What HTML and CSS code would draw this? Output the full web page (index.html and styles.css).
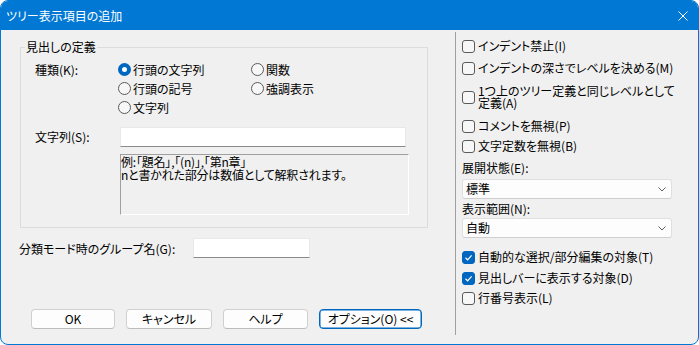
FILE: index.html
```html
<!DOCTYPE html>
<html lang="ja">
<head>
<meta charset="utf-8">
<title>ツリー表示項目の追加</title>
<link rel="stylesheet" href="styles.css">
</head>
<body>
<div class="window">
  <div class="titlebar">
    <span class="title">ツリー表示項目の追加</span>
    <svg class="close" width="10" height="10" viewBox="0 0 10 10"><path d="M0.5 0.5L9.5 9.5M9.5 0.5L0.5 9.5" stroke="#fff" stroke-width="1" fill="none"/></svg>
  </div>
  <div class="content">
    <div class="left">
      <fieldset class="group">
        <legend>見出しの定義</legend>
        <div class="kind-row">
          <span class="kind-lbl">種類(K):</span>
          <div class="radios">
            <div class="radio"><span class="rb on"></span>行頭の文字列</div>
            <div class="radio"><span class="rb"></span>関数</div>
            <div class="radio"><span class="rb"></span>行頭の記号</div>
            <div class="radio"><span class="rb"></span>強調表示</div>
            <div class="radio"><span class="rb"></span>文字列</div>
          </div>
        </div>
        <div class="str-row">
          <span class="str-lbl">文字列(S):</span>
          <div class="str-fields">
            <div class="edit str-edit"></div>
            <div class="example">例:「題名」,「(n)」,「第n章」<br>nと書かれた部分は数値として解釈されます。</div>
          </div>
        </div>
      </fieldset>
      <div class="gname-row">
        <span class="gname-lbl">分類モード時のグループ名(G):</span>
        <div class="edit gname-edit"></div>
      </div>
      <div class="buttons">
        <div class="btn btn-ok">OK</div>
        <div class="btn btn-cancel">キャンセル</div>
        <div class="btn btn-help">ヘルプ</div>
        <div class="btn btn-opt focus">オプション(O) &lt;&lt;</div>
      </div>
    </div>
    <div class="sep"></div>
    <div class="right">
      <div class="check r1"><span class="cb"></span>インデント禁止(I)</div>
      <div class="check r2"><span class="cb"></span>インデントの深さでレベルを決める(M)</div>
      <div class="check r3"><span class="cb"></span><span class="two">1つ上のツリー定義と同じレベルとして<br>定義(A)</span></div>
      <div class="check r4"><span class="cb"></span>コメントを無視(P)</div>
      <div class="check r5"><span class="cb"></span>文字定数を無視(B)</div>
      <div class="flabel fl1">展開状態(E):</div>
      <div class="combo cb1"><span>標準</span><svg width="8" height="5" viewBox="0 0 8 5"><path d="M0.5 0.5L4 4L7.5 0.5" stroke="#606060" fill="none" stroke-width="1"/></svg></div>
      <div class="flabel fl2">表示範囲(N):</div>
      <div class="combo cb2"><span>自動</span><svg width="8" height="5" viewBox="0 0 8 5"><path d="M0.5 0.5L4 4L7.5 0.5" stroke="#606060" fill="none" stroke-width="1"/></svg></div>
      <div class="check r6"><span class="cb on"><svg width="9" height="9" viewBox="0 0 9 9"><path d="M1.5 4.8L3.6 6.8L7.6 2.4" stroke="#fff" stroke-width="1.2" fill="none"/></svg></span>自動的な選択/部分編集の対象(T)</div>
      <div class="check r7"><span class="cb on"><svg width="9" height="9" viewBox="0 0 9 9"><path d="M1.5 4.8L3.6 6.8L7.6 2.4" stroke="#fff" stroke-width="1.2" fill="none"/></svg></span>見出しバーに表示する対象(D)</div>
      <div class="check r8"><span class="cb"></span>行番号表示(L)</div>
    </div>
  </div>
</div>
</body>
</html>
```

FILE: styles.css
```css
html, body {
  margin: 0;
  padding: 0;
  background: #ffffff;
}
body {
  font-family: "Noto Sans CJK JP", "Noto Sans", sans-serif;
  font-size: 12px;
  font-feature-settings: "palt" 1;
  color: #000;
}
.window {
  width: 699px;
  height: 345px;
  box-sizing: border-box;
  border: 1px solid #0078d4;
  border-radius: 8px;
  overflow: hidden;
  background: #f0f0f0;
}
.titlebar {
  height: 29px;
  background: #0078d4;
  color: #fff;
  display: flex;
  align-items: center;
  justify-content: space-between;
  padding: 0 10px 0 5px;
  box-sizing: border-box;
  font-size: 12px;
  line-height: 14px;
}
.title {
  padding-top: 1px;
}
.close {
  display: block;
}
.content {
  display: flex;
  height: 314px;
}
.left {
  width: 454px;
  flex: none;
}
.sep {
  width: 1px;
  background: #a0a0a0;
  margin: 2px 0 9px 0;
  flex: none;
}
.right {
  flex: 1;
  padding-left: 6px;
  display: flex;
  flex-direction: column;
}

/* group box */
.group {
  margin: 10px 0 0 19px;
  padding: 0 0 0 4px;
  border: 1px solid #dcdcdc;
  width: 408px;
  height: 188px;
  box-sizing: border-box;
  min-width: 0;
}
.group legend {
  padding: 0 1px;
  line-height: 14px;
  font-size: 12px;
}
.kind-row {
  display: flex;
  margin: 6px 0 0 10px;
}
.kind-lbl {
  width: 83px;
  line-height: 19px;
  flex: none;
}
.radios {
  display: grid;
  grid-template-columns: 133px auto;
  grid-auto-rows: 19px;
}
.radio {
  display: flex;
  align-items: center;
  gap: 2px;
  line-height: 19px;
}
.rb {
  width: 13px;
  height: 13px;
  box-sizing: border-box;
  border: 1px solid #5a5a5a;
  border-radius: 50%;
  background: #f7f7f7;
  flex: none;
}
.rb.on {
  border: 4px solid #0067c0;
  background: #ffffff;
}
.str-row {
  display: flex;
  margin: 10px 0 0 10px;
}
.str-lbl {
  width: 85px;
  line-height: 20px;
  flex: none;
}
.edit {
  background: #ffffff;
  box-sizing: border-box;
  border: 1px solid #e8e8e8;
  border-bottom-color: #8a8a8a;
  height: 20px;
}
.str-edit {
  width: 286px;
}
.example {
  margin-top: 7px;
  width: 289px;
  height: 61px;
  box-sizing: border-box;
  border: 1px solid #ffffff;
  border-top-color: #a0a0a0;
  border-left-color: #a0a0a0;
  font-size: 12px;
  line-height: 13px;
  letter-spacing: -0.2px;
}

.gname-row {
  display: flex;
  margin: 10px 0 0 18px;
}
.gname-lbl {
  width: 174px;
  line-height: 22px;
  flex: none;
}
.gname-edit {
  width: 117px;
}

.buttons {
  display: flex;
  gap: 11px;
  margin: 49px 0 0 30px;
}
.btn {
  height: 20px;
  box-sizing: border-box;
  border: 1px solid #d0d0d0;
  border-bottom-color: #bcbcbc;
  border-radius: 4px;
  background: #fdfdfd;
  display: flex;
  align-items: center;
  justify-content: center;
  line-height: 14px;
}
.btn-ok { width: 84px; }
.btn-cancel { width: 86px; }
.btn-help { width: 85px; }
.btn-opt { width: 103px; }
.btn.focus {
  border: 1px solid #0067c0;
  box-shadow: inset 0 0 0 0.5px #0067c0;
}

/* right column */
.check {
  display: flex;
  align-items: center;
  gap: 3px;
  height: 20px;
  line-height: 14px;
  white-space: nowrap;
}
.cb {
  width: 13px;
  height: 13px;
  box-sizing: border-box;
  border: 1px solid #5a5a5a;
  border-radius: 3px;
  background: #f7f7f7;
  flex: none;
  display: flex;
  align-items: center;
  justify-content: center;
}
.cb.on {
  background: #0067c0;
  border-color: #0067c0;
}
.cb svg { display: block; }
.two {
  line-height: 12px;
}
.r1 { margin-top: 6px; }
.r2 { margin-top: 2px; }
.r3 { margin-top: 7px; height: 24px; }
.r4 { margin-top: 7px; }
.r5 { margin-top: 0; }
.flabel {
  line-height: 16px;
  height: 16px;
}
.fl1 { margin-top: 4px; }
.fl2 { margin-top: 2px; }
.combo {
  width: 210px;
  height: 20px;
  box-sizing: border-box;
  border: 1px solid #e0e0e0;
  border-bottom-color: #cfcfcf;
  border-radius: 3px;
  background: #fdfdfd;
  display: flex;
  align-items: center;
  justify-content: space-between;
  padding: 0 5px 0 3px;
  line-height: 14px;
}
.combo svg { display: block; }
.cb1 { margin-top: 3px; }
.cb2 { margin-top: 1px; }
.r6 { margin-top: 9px; }
.r7 { margin-top: 1px; }
.r8 { margin-top: 0; }
```
